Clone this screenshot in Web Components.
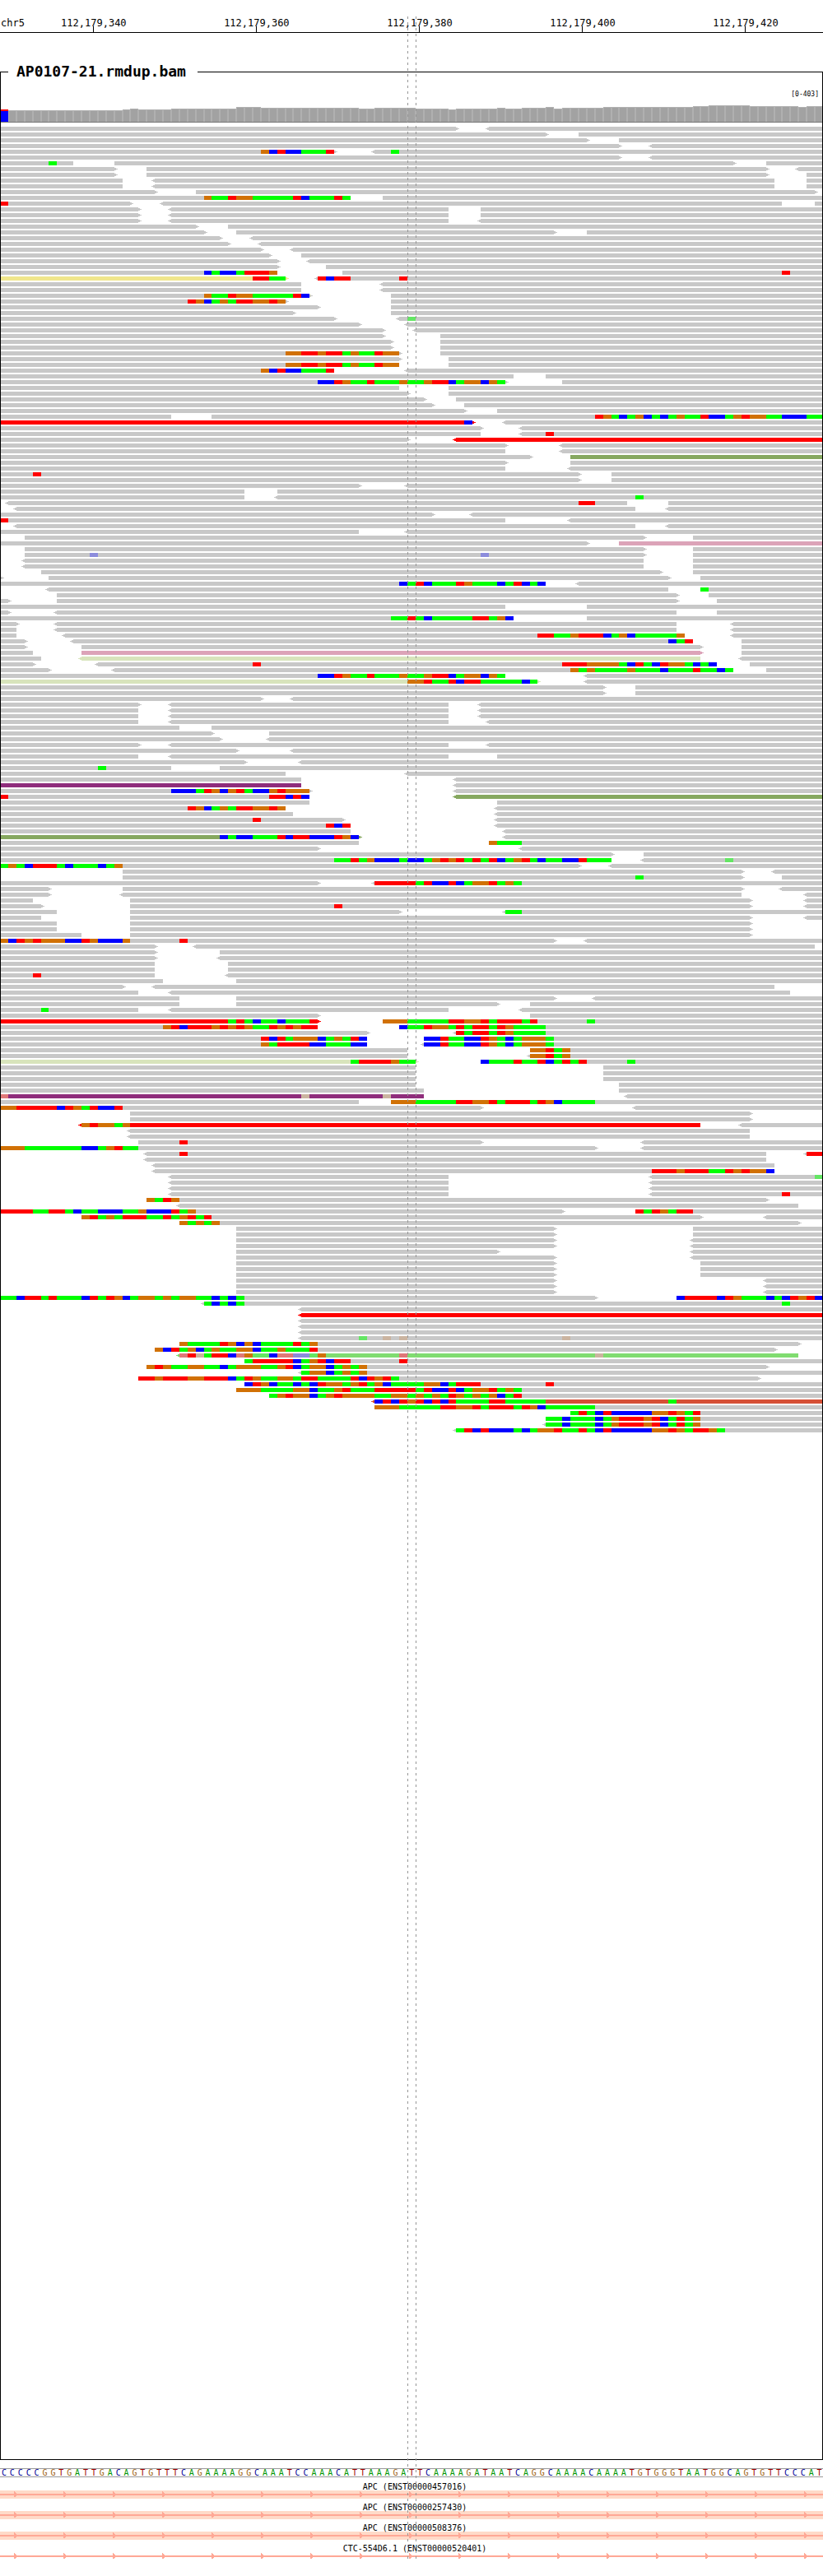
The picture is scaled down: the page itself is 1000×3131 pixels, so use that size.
<!DOCTYPE html>
<html lang="en">
<head>
<meta charset="utf-8">
<title>AP0107-21.rmdup.bam – chr5</title>
<style>
  html, body { margin: 0; background: #fff; }
  body { font-family: "DejaVu Sans Mono", monospace; color: #000; }
</style>
</head>
<body>
<genome-view>
  <genome-ruler slot="ruler" chrom="chr5" first="112179340" step="20" count="5"></genome-ruler>
  <alignment-track slot="tracks" label="AP0107-21.rmdup.bam">
    <coverage-plot scale="[0-403]"></coverage-plot>
    <read-pileup></read-pileup>
  </alignment-track>
  <reference-sequence slot="tracks" bases="CCCCCGGTGATTGACAGTGTTTCAGAAAAGGCAAATCCAAACATTAAAGATTCAAAAGATAATCAGGCAAAACAAAATGTGGGTAATGGCAGTGTTCCCAT"></reference-sequence>
  <gene-track slot="tracks" exon>APC (ENST00000457016)</gene-track>
  <gene-track slot="tracks" exon>APC (ENST00000257430)</gene-track>
  <gene-track slot="tracks" exon>APC (ENST00000508376)</gene-track>
  <gene-track slot="tracks">CTC-554D6.1 (ENST00000520401)</gene-track>
</genome-view>

<script>
const BASES = 101;
const BASE_COLORS = {
  A: '#00ff00', C: '#0000ff', G: '#d17105', T: '#ff0000',
  a: '#64e664', c: '#8c8cdc', g: '#cbb4a0', t: '#e07878'
};
const READ_COLORS = {
  '': '#c8c8c8', R: '#ff0000', O: '#86a860', P: '#dca3b8', L: '#d8e4bc',
  Y: '#f0e68c', V: '#8f2d7c', M: '#80dc70', D: '#d65036'
};

// One line per pileup row: reads as [colour][<]start-end[>], mismatches as @base+letters.
const ROWS = `
0-56> <60-101
0-67> 71-101
0-72> 76-101
0-76> <80-101
0-41> @32GCTCCAAAT <46-101 @48A
0-76> <80-101
0-9 @6A 14-90> 94-101
0-14> 18-94> <98-101
0-14> 18-94> 99-101
0-15 <19-95 99-101
0-15 <19-95 99-101
0-19> 24-100>
0-43 @25GAATGGAAAAATCAAATA 47-101
0-16> @0T <20-96 100-101
0-17> <21-55 59-101
0-17> <21-55 59-101
0-17> <21-55 <59-101
0-24> 28-101
0-25> 29-68> 72-101
0-27> <31-101
0-28> <32-101
0-32> <36-101
0-33> 37-101
0-34> <38-101
0-34> 40-101
0-34 @25CACCATTTG 42-101 @96T
Y0-35> @31TTAA <39-101 @39TCTT @49T
0-37 <47-101
0-37 <47-101
0-38> @25GAATGGAAAAATC 48-101
0-35> @23TGCAGATTGGTG 48-101
0-39> 48-101
0-36> 48-101
0-41> <49-101 @50a
0-44> <50-101
0-47> <51-101
0-47> 54-101
0-48> 54-101
0-48> 54-101
0-49> @35GGTTGTTAGAATGG 54-101
0-49> 55-101
0-49 @35GGTTGTTAGAATGG 55-101
0-41 @32GCTCCAAAT <50-101
0-63 67-101
0-62> @39CCTGAATAAAGAAGTTCAGGCGA 69-101
0-49 55-101
0-50> 55-101
0-52> 56-101
0-53> 57-101
0-57> 61-101
0-21 26-101 @73TGACAGCACAGAATCCAGTGGAACCCAA
R0-58> @57C <62-101
0-59> <64-101
0-59 <64-101 @67T
0-50> R<56-101
0-62> <69-101
0-62 <69-101
0-65> O70-101
0-62> 70-101
0-62 <70-101
0-71> @4T 75-101
0-71> 75-101
0-44> <50-101
0-30 34-101
0-30 <34-101 @78A
<1-77 @71TT 82-101
<2-78 <82-101
0-53> <58-101
0-62 @0T <70-101
<2-78 <82-101
0-44 <50-101
3-79> 85-101
0-72> P76-101
3-79> 85-101
3-79> @11c @59c 85-101
<3-79 85-101
<3-79 85-101
5-81> 85-101
0-0> 6-82> 86-101
0-67 @49CATCAAATGAAACATCAC <71-101
<6-82 86-101 @86A
7-83> 87-101
0-1> 7-83> 88-101
0-62 72-101
0-1> <7-83 88-101
0-63 @48AATACAAAAATTAGC 72-101
0-2> <7-83 <90-101
0-2 <7-83 <90-101
0-2 <8-84 @66TTAAGTTTCAGCAAAAAG <90-101
0-3> <9-85 @82CAT 91-101
0-3> 10-86> 91-101
0-4 P10-86> 91-101
0-5 L<10-86 <91-101
0-4> <12-88 @31T @69TTTGGGGACTACTGGACAC 92-101
0-6> <14-90 @70GAGAAAAGAAACAAATAACA 94-101
0-62 @39CCTGAATAAAGAAGTTCAGGCGA <72-101
L0-66> @50GGTAATCTTAAAAACA <72-101
0-74> 78-101
0-74> 78-101
0-32> <36-101
0-17> <21-55 <59-101
0-17 <21-55 <59-101
0-17 <21-55 <59-101
0-17 <21-55 <60-101
0-22 26-101
0-26> 33-101
0-27> <33-101
0-17> <21-55 <60-101
0-29> <36-101
0-17 <21-55 61-101
0-30> <37-101
0-21 @12A 27-101
0-35 <50-101
0-37 <56-101
V0-37 <56-101
0-38> @21CCCATGCGTACCGTGGG <56-101
0-38 @0T @33TTCTC O<56-101
0-38 61-101
0-35 @23TGCAGATTGGTG <61-101
0-36 <61-101
0-42> @31T <61-101
0-43 @40TCT <61-101
0-43 <62-101
O0-44> @27CACCAAATCTTCCCTGC <62-101
0-44 60-101 @60GAAA
0-39> <64-101
0-75> 79-101
0-75 @41AATAGCCCACCAGTGTATATCAGTACAACCTAAA <79-101 @89a
0-71> @0AGACTTTACAAACAG <75-101
15-91> <95-101
15-91> @78A 96-101
0-39> <46-101 @46TTTTTATCCTCAGGTAGA
0-6> 15-91> <96-101
0-6> <15-91 <99-101
0-4 16-92> <99-101
0-5> 16-92> @41T <99-101
0-7 16-49> <62-101 @62AA
0-5 16-92> <99-101
0-7 16-92>
0-7 16-92>
0-10 16-92>
0-68> @0GCTGTGGGCCTGCCCG @22T <72-101
0-19> <24-100
0-19> 27-101
0-19> <27-101
0-19 28-101
0-19 28-101
0-19 @4T <28-101
0-20 29-101
0-15> <19-95
0-17 <21-97
0-22 29-68> <73-101
0-22 29-61> 65-101
0-17 @5A <21-55 <64-101
0-39> 65-101
R0-39> @28ATACAACAAAT 47-101 @47GGGAAAAATTGGTATTTAT @72A
0-39 @20GTCTTTGTGTGAATGTGTT 49-101 @49CAATGGATATTATGAAAA
0-45> <56-101 @56TATTATGAAAA
0-45 @32TCTAGGGCAGATC 52-101 @52CCTAACCTGACAGGGA
0-45 @32GATTTTCCAAACC <52-101 @52CCTAACCTGACAGGGA
0-50 65-101 @65GGTAG
0-50 <65-101 @65GGTAG
L0-51> @43ATTTTGAA 59-101 @59CAAATAATCATAT @77A
0-51 74-101
0-51 74-101
0-51 74-101
0-51 76-101
0-52 76-101
V0-52 @0t @37g @47g <77-101
0-44 48-101 @48GGGAAAAATTGGTATTTATGCAAAA
0-59> @0GGTTTTTCTGATCCT <78-101
16-92>
16-92>
R<10-86 @10GTGGAG <91-101
<16-92
<16-92
17-59> @22T <79-101
0-73> @0GGGAAAAAAACCAGTAA <79-101
<18-94 @22T <99-101 @99TT
<18-94
<19-95
<19-95 @80TTTGTTTAATGTGGC
<21-55 <80-101 @100a
<21-55 <80-101
<21-55 <80-101
<21-55 <80-101 @96T
18-94> @18GATG
<22-98
0-69> @0TTTTAATTACAACCCAAGCCCTAG 78-101 @78TATGATT
10-86> @10GTAGATTTAATAGTAT <94-101
22-98> @22GAGAG
29-68> 85-101
29-68> 85-101
29-68> <85-101
29-68> <85-101
29-61> <85-101
29-68> <85-101
29-68> 86-101
29-68> 86-101
29-68> 86-101
29-68> <94-101
29-68> <94-101
29-68> <94-101
0-73> @0AACTTATAAACTATGCAGGAGAGGAACACA 83-101 @83CTTTTCTGAAACACTGTC
<25-101 @25ACACA @96A
<37-101
R<37-101
<37-101
<37-101
<37-101
<37-101 @44a @47g @49g @69g
22-98> @22GAAAATGCGCAAAATAG
19-95> @19GCTAGCAGAAGGCAAGAAAT
M<22-98 @22tTgATTCtGaaCttccaG @49t @73g
30-101 @30ATTTTTCAGTCTT @49T
18-94> @18GTGAAGGAACAGGGAAGTCAGGCAGAG
<37-101 @37AGGCAGAG
17-93> @17TTGTTTGGTTTCATGAAGGATTAAAATCTGTA
30-101 @30CTGCAACACTGGAGTAGCAAAAGGCATTT @67T
29-101 @29GGGAAAAGGCAAGTAAATTTTTATCCTCAGGTAGA
33-101 @33AGTGGCAGTGGGGAAGGAGAGATGAGAGCAT
D<46-101 @46CTCTGTCTCTAAAATTAAAAA @82A
46-101 @46GGGAAAAATTGGTATTTATGCAAAAAA
70-101 @70ATACTCCCCCGGTGAT
67-101 @67AACAAACAGTTTGTCATAG
<67-101 @67AACAAACAGTTTGTCATAG
<56-101 @56ATCTCCCACAGGTAATACTCCCCCGGTGATTGA`.trim().split('\n');

// Coverage as runs: [number of bases, bar height in px]
const COVERAGE = [[1,15],[14,14],[1,15],[1,16],[4,15],[8,16],[3,18],[12,17],[2,16],[5,17],[4,16],
  [1,15],[5,16],[1,17],[2,16],[3,17],[1,18],[1,16],[5,17],[11,18],[2,19],[5,20],[6,19],[1,18],[2,19]];

const rect = (x, y, w, h, fill) => `<rect x="${x}" y="${y}" width="${w}" height="${h}" fill="${fill}"/>`;

class BaseElement extends HTMLElement {
  constructor() { super(); this.attachShadow({ mode: 'open' }); }
}

/* Drawing surface that is redrawn on the base grid whenever its width changes. */
class GridPlot extends BaseElement {
  connectedCallback() {
    this.shadowRoot.innerHTML = this.markup();
    this.svg = this.shadowRoot.querySelector('svg');
    this.redraw();
    new ResizeObserver(() => this.redraw()).observe(this);
  }
  redraw() {
    const inner = this.clientWidth;
    if (!inner || inner === this.drawn) return;
    this.drawn = inner;
    const pitch = (inner + 2) / BASES;
    const x = i => Math.min(inner, Math.max(0, Math.round(i * pitch) - 1));
    this.svg.innerHTML = this.draw(x);
  }
}

customElements.define('genome-ruler', class extends BaseElement {
  connectedCallback() {
    const n = +this.getAttribute('count');
    let ticks = '';
    for (let i = 0; i < n; i++) {
      const pos = (+this.getAttribute('first') + i * this.getAttribute('step')).toLocaleString('en-US');
      ticks += `<div class="tick"><span>${pos}</span></div>` + (i < n - 1 ? '<div class="gap"></div>' : '');
    }
    this.shadowRoot.innerHTML = `<style>
      :host { display: flex; padding-top: 20px; height: 19px; border-bottom: 1px solid #000;
              font-size: 12px; line-height: 16px; white-space: nowrap; }
      .chrom { flex: 5 1 0; min-width: 0; text-indent: 1px; }
      .tick { flex: 36 1 0; min-width: 0; display: flex; flex-direction: column; align-items: center; }
      .tick::after { content: ""; width: 1px; height: 7px; margin-top: -4px; background: #000; }
      .gap { flex: 4 1 0; } .end { flex: 1 1 0; }
    </style><div class="chrom">${this.getAttribute('chrom')}</div>${ticks}<div class="end"></div>`;
  }
});

customElements.define('alignment-track', class extends BaseElement {
  connectedCallback() {
    this.shadowRoot.innerHTML = `<style>
      :host { display: block; margin-top: 36px; }
      fieldset { margin: 0; padding: 0; border: 1px solid #000; min-width: 0; }
      legend { margin-left: 9px; padding: 0 14px 0 10px; font-size: 18px; font-weight: bold; line-height: 22px; }
    </style><fieldset><legend>${this.getAttribute('label')}</legend><slot></slot></fieldset>`;
  }
});

customElements.define('coverage-plot', class extends GridPlot {
  markup() {
    return `<style>
      :host { display: block; padding-top: 11px; }
      div { font-size: 8px; line-height: 11px; text-align: right; padding-right: 4px; }
      svg { display: block; width: 100%; height: 29px; shape-rendering: crispEdges; }
    </style><div>${this.getAttribute('scale')}</div><svg aria-hidden="true"></svg>`;
  }
  draw(x) {
    let out = '', i = 0;
    for (const [n, h] of COVERAGE) for (let k = 0; k < n; k++, i++) {
      const a = x(i), w = x(i + 1) - a;
      out += i === 0
        ? rect(a, 28 - h, w, 2, '#f00') + rect(a, 30 - h, w, h - 2, '#00f')
        : rect(a, 28 - h, w, h, '#b0b0b0') + rect(a + 1, 29 - h, w - 2, h - 1, '#a2a2a2');
    }
    return out + rect(0, 28, x(BASES), 1, '#777');
  }
});

customElements.define('read-pileup', class extends GridPlot {
  markup() {
    return `<style>
      :host { display: block; padding-top: 5px; min-height: 2835px; }
      svg { display: block; width: 100%; height: ${ROWS.length * 7}px; shape-rendering: crispEdges; }
    </style><svg aria-hidden="true"></svg>`;
  }
  draw(x) {
    let out = '';
    ROWS.forEach((row, r) => {
      const y = r * 7;
      for (const item of row.split(' ')) {
        if (item[0] === '@') {
          const [, start, letters] = item.match(/@(\d+)(\w+)/);
          [...letters].forEach((b, k) => {
            const a = x(+start + k);
            out += rect(a, y, x(+start + k + 1) - a, 5, BASE_COLORS[b]);
          });
          continue;
        }
        const [, color, left, start, end, right] = item.match(/([A-Z]?)(<?)(\d+)-(\d+)(>?)/);
        const fill = READ_COLORS[color], a = x(+start), b = x(+end);
        out += rect(a, y, b - a, 5, fill);
        if (left) out += rect(a - 2, y + 1, 2, 3, fill) + rect(a - 4, y + 2, 2, 1, fill);
        if (right) out += rect(b, y + 1, 2, 3, fill) + rect(b + 2, y + 2, 2, 1, fill);
      }
    });
    return out;
  }
});

customElements.define('reference-sequence', class extends BaseElement {
  connectedCallback() {
    this.shadowRoot.innerHTML = `<style>
      :host { display: flex; margin: 10px 0 1px; border: solid #999; border-width: 1px 0;
              font-size: 10px; line-height: 9px; }
      span { flex: 1 1 0; min-width: 0; text-align: center; }
      .A { color: #009600; } .C { color: #000096; } .G { color: #a06414; } .T { color: #a00000; }
    </style>` + [...this.getAttribute('bases')].map(b => `<span class="${b}">${b}</span>`).join('');
  }
});

customElements.define('gene-track', class extends BaseElement {
  connectedCallback() {
    this.shadowRoot.innerHTML = `<style>
      :host { display: block; }
      .name { padding: 6px 0 0 8px; font-size: 10px; line-height: 9px; text-align: center; }
      svg { display: block; width: 100%; height: 10px; shape-rendering: crispEdges; }
      :host([exon]) svg { background: #ffdac8; }
    </style><div class="name"><slot></slot></div>
    <svg aria-hidden="true"><defs><pattern id="strand" width="60" height="10" patternUnits="userSpaceOnUse">
      <path d="M0 4H60V6H0ZM17 1H18V2H19V3H20V7H19V8H17Z" fill="#ffa896"/></pattern></defs>
      <rect width="100%" height="10" fill="url(#strand)"/></svg>`;
  }
});

customElements.define('genome-view', class extends BaseElement {
  connectedCallback() {
    this.shadowRoot.innerHTML = `<style>
      :host { display: block; position: relative; padding-bottom: 19px; }
      .focus { position: absolute; top: 20px; bottom: 21px; left: calc(100% * 50 / 101);
               width: calc(100% / 101); display: flex; justify-content: space-between; pointer-events: none; }
      .focus i { width: 1px; background: repeating-linear-gradient(#969696 0 3px, transparent 3px 7px); }
      .focus i + i { margin-right: -1px; }
    </style>
    <slot name="ruler"></slot><slot name="tracks"></slot>
    <div class="focus"><i></i><i></i></div>`;
  }
});
</script>
</body>
</html>
